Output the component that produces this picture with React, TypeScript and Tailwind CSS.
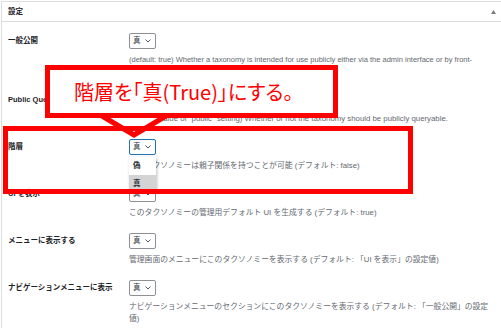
import { type FC } from "react";

interface RowProps {
    label: string;
    lines: string[];
    focused?: boolean;
    latin?: boolean;
}

const rows: RowProps[] = [
    {
        label: "一般公開",
        lines: [
            "(default: true) Whether a taxonomy is intended for use publicly either via the admin interface or by front-",
            "end users.",
        ],
        latin: true,
    },
    {
        label: "Public Queryable",
        lines: ['(default: value of "public" setting) Whether or not the taxonomy should be publicly queryable.'],
    },
    {
        label: "階層",
        lines: ["このタクソノミーは親子関係を持つことが可能 (デフォルト: false)"],
        focused: true,
    },
    {
        label: "UI を表示",
        lines: ["このタクソノミーの管理用デフォルト UI を生成する (デフォルト: true)"],
    },
    {
        label: "メニューに表示する",
        lines: ["管理画面のメニューにこのタクソノミーを表示する (デフォルト: 「UI を表示」の設定値)"],
    },
    {
        label: "ナビゲーションメニューに表示",
        lines: ["ナビゲーションメニューのセクションにこのタクソノミーを表示する (デフォルト: 「一般公開」の設定", "値)"],
    },
];

const Chevron: FC = () => (
    <svg width="6" height="4" viewBox="0 0 6 4" className="shrink-0">
        <polyline points="0.5,0.5 3,3 5.5,0.5" fill="none" stroke="#50575e" strokeWidth="1" />
    </svg>
);

const Select: FC<{ focused?: boolean }> = ({ focused }) => (
    <div
        className={
            focused
                ? "w-[27px] h-[16px] border border-[#2271b1] rounded-[2px] bg-white flex items-center justify-between pl-[3px] pr-[4px]"
                : "w-[27px] h-[16px] border border-[#8c8f94] rounded-[2px] bg-white flex items-center justify-between pl-[3px] pr-[4px]"
        }
    >
        <span className="text-[7.5px] leading-none text-[#2c3338]">真</span>
        <Chevron />
    </div>
);

const Row: FC<RowProps> = ({ label, lines, focused, latin }) => (
    <div className="flex pt-[11px] pb-[3px]">
        <div className="w-[127px] pl-[6px] h-[16px] flex items-center text-[7.5px] font-bold text-[#1d2327] whitespace-nowrap">
            {label}
        </div>
        <div className="flex flex-col">
            <Select focused={focused} />
            <div
                className={
                    latin
                        ? "mt-[5px] text-[7.5px] leading-[12px] text-[#646970] whitespace-nowrap"
                        : "mt-[5px] text-[7.8px] leading-[12px] text-[#646970] whitespace-nowrap"
                }
            >
                {lines.map((line) => (
                    <div key={line}>{line}</div>
                ))}
            </div>
        </div>
    </div>
);

export default function App() {
    return (
        <div className="relative w-[501px] h-[330px] overflow-hidden bg-white font-['Liberation_Sans','Noto_Sans_CJK_JP',sans-serif]">
            <div className="mt-[1px] ml-[1px] border-t border-l border-[#dcdcde]">
                <div className="h-[20px] flex items-center justify-between pl-[6px] pr-[5px] border-b border-[#dcdcde]">
                    <span className="text-[7.5px] font-bold text-[#1d2327]">設定</span>
                    <svg width="5" height="4" viewBox="0 0 5 4">
                        <polygon points="2.5,0 5,4 0,4" fill="#787c82" />
                    </svg>
                </div>
                {rows.map((row) => (
                    <Row key={row.label} {...row} />
                ))}
            </div>

            {/* open dropdown of the focused select */}
            <div className="absolute left-[129px] top-[157px] w-[27px] bg-white shadow-[1px_1px_3px_rgba(0,0,0,0.25)] text-[7.5px] font-bold text-[#2c3338]">
                <div className="h-[18px] flex items-center pl-[4px]">偽</div>
                <div className="h-[17px] flex items-center pl-[4px] bg-[#d4d4d4]">真</div>
            </div>

            {/* callout pointer */}
            <svg className="absolute left-0 top-0" width="501" height="330">
                <polyline
                    points="97,113 134,135 171,113"
                    fill="white"
                    stroke="#ff0000"
                    strokeWidth="5"
                    strokeLinejoin="miter"
                />
            </svg>

            {/* callout */}
            <div className="absolute left-[45px] top-[65px] w-[293px] h-[53px] border-[5px] border-[#ff0000] bg-white flex items-center pl-[24px]">
                <span className="text-[20px] leading-none text-[#ff0000] font-['Noto_Sans_CJK_JP',sans-serif] [font-feature-settings:'palt'] whitespace-nowrap">
                    階層を「真(True)」にする。
                </span>
            </div>

            {/* highlight box */}
            <div className="absolute left-[3px] top-[126px] w-[410px] h-[68px] border-[5px] border-[#ff0000]" />
        </div>
    );
}
